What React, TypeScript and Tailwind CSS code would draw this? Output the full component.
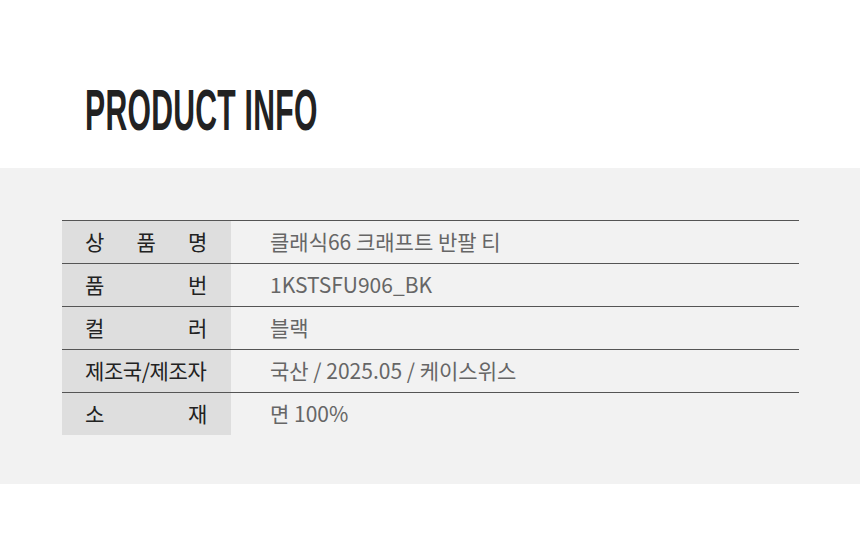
const rows: { label: string[]; value: string }[] = [
  { label: ["상", "품", "명"], value: "클래식66 크래프트 반팔 티" },
  { label: ["품", "번"], value: "1KSTSFU906_BK" },
  { label: ["컬", "러"], value: "블랙" },
  { label: ["제조국/제조자"], value: "국산 / 2025.05 / 케이스위스" },
  { label: ["소", "재"], value: "면 100%" },
];

export default function App() {
  return (
    <div className="h-[539px] w-[860px] bg-white font-['Noto_Sans_CJK_KR',sans-serif]">
      <div className="flex h-[168px] items-end px-[85px] pb-[29px]">
        <h1 className="origin-left scale-x-[0.52] font-['Liberation_Sans',sans-serif] text-[58px] font-bold leading-none tracking-[0.5px] whitespace-nowrap text-[#222]">
          PRODUCT INFO
        </h1>
      </div>
      <div className="h-[316px] bg-[#f2f2f2] px-[62px] pt-[52px]">
        <div className="w-[737px]">
          {rows.map((row) => (
            <div key={row.value} className="flex h-[43px] border-t border-[#555]">
              <div className="flex w-[169px] items-center justify-between bg-[#dedede] pl-[23px] pr-[24px] text-[21px] tracking-[-0.4px] text-[#222]">
                {row.label.map((c, i) => (
                  <span key={i}>{c}</span>
                ))}
              </div>
              <div className="flex items-center pl-[39px] text-[21px] text-[#666]">
                {row.value}
              </div>
            </div>
          ))}
        </div>
      </div>
    </div>
  );
}
